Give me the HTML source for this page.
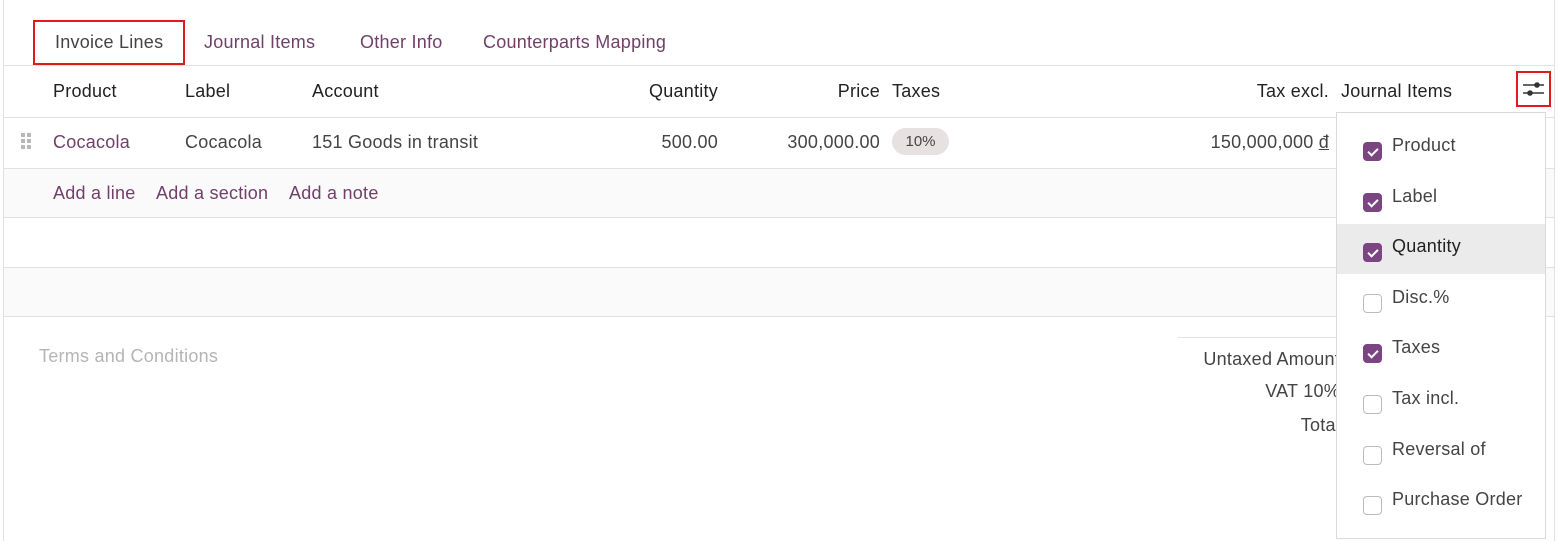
<!DOCTYPE html>
<html><head><meta charset="utf-8"><style>
*{box-sizing:border-box;margin:0;padding:0}
body{width:1558px;height:541px;background:#fff;font-family:"Liberation Sans",sans-serif;font-size:18px;letter-spacing:0.25px;color:#444;position:relative;overflow:hidden}
.abs{position:absolute;white-space:nowrap}
.p{color:#71406a}
.line{position:absolute;left:4px;right:4px;height:1px;background:#dee2e6}
.cb{position:absolute;width:19px;height:19px;border-radius:4px;border:1px solid #bbb;background:#fff}
.cb.on{background:#7b4582;border-color:#7b4582}
.cb.on::after{content:"";position:absolute;left:6px;top:2.5px;width:4px;height:8px;border:solid #fff;border-width:0 2px 2px 0;transform:rotate(45deg)}
.d{position:absolute;width:4px;height:4px;background:#b8b8b8}
</style></head><body>
<div style="position:absolute;left:3px;top:0;bottom:0;width:1px;background:#dee2e6"></div>
<div style="position:absolute;right:3px;top:0;bottom:0;width:1px;background:#dee2e6"></div>
<div style="position:absolute;left:4px;right:4px;top:169px;height:48px;background:#fafafa"></div>
<div style="position:absolute;left:4px;right:4px;top:268px;height:48px;background:#fafafa"></div>
<div class="line" style="top:65px"></div>
<div class="line" style="top:117px"></div>
<div class="line" style="top:168px"></div>
<div class="line" style="top:217px"></div>
<div class="line" style="top:267px"></div>
<div class="line" style="top:316px"></div>
<div style="position:absolute;left:1178px;width:170px;top:337px;height:1px;background:#dee2e6"></div>
<div style="position:absolute;left:33px;top:20px;width:152px;height:45px;border:2px solid #e01b1b"></div>
<div class="abs" style="left:55px;top:32px;color:#444">Invoice Lines</div>
<div class="abs p" style="left:204px;top:32px">Journal Items</div>
<div class="abs p" style="left:360px;top:32px">Other Info</div>
<div class="abs p" style="left:483px;top:32px">Counterparts Mapping</div>
<div class="abs" style="left:53px;top:81px;color:#222">Product</div>
<div class="abs" style="left:185px;top:81px;color:#222">Label</div>
<div class="abs" style="left:312px;top:81px;color:#222">Account</div>
<div class="abs" style="right:840px;top:81px;color:#222">Quantity</div>
<div class="abs" style="right:678px;top:81px;color:#222">Price</div>
<div class="abs" style="left:892px;top:81px;color:#222">Taxes</div>
<div class="abs" style="right:229px;top:81px;color:#222">Tax excl.</div>
<div class="abs" style="left:1341px;top:81px;color:#222">Journal Items</div>
<div style="position:absolute;left:1516px;top:71px;width:35px;height:36px;border:2px solid #e01b1b"></div>
<svg class="abs" style="left:1523px;top:81px" width="21" height="16" viewBox="0 0 21 16"><path d="M0 4h21M0 12h21" stroke="#333" stroke-width="1.6"/><circle cx="14" cy="4" r="2.8" fill="#333"/><circle cx="7" cy="12" r="2.8" fill="#333"/></svg>
<div class="d" style="left:21px;top:133px"></div><div class="d" style="left:27px;top:133px"></div>
<div class="d" style="left:21px;top:139px"></div><div class="d" style="left:27px;top:139px"></div>
<div class="d" style="left:21px;top:145px"></div><div class="d" style="left:27px;top:145px"></div>
<div class="abs p" style="left:53px;top:132px">Cocacola</div>
<div class="abs" style="left:185px;top:132px">Cocacola</div>
<div class="abs" style="left:312px;top:132px">151 Goods in transit</div>
<div class="abs" style="right:840px;top:132px">500.00</div>
<div class="abs" style="right:678px;top:132px">300,000.00</div>
<div class="abs" style="left:892px;top:128px;width:57px;height:27px;border-radius:14px;background:#e7e1e1;font-size:15px;letter-spacing:0;text-align:center;line-height:27px">10%</div>
<div class="abs" style="right:229px;top:132px">150,000,000 <u>đ</u></div>
<div class="abs p" style="left:53px;top:183px">Add a line</div>
<div class="abs p" style="left:156px;top:183px">Add a section</div>
<div class="abs p" style="left:289px;top:183px">Add a note</div>
<div class="abs" style="left:39px;top:346px;color:#b5b5b5">Terms and Conditions</div>
<div class="abs" style="right:218px;top:349px">Untaxed Amount</div>
<div class="abs" style="right:218px;top:381px">VAT 10%</div>
<div class="abs" style="right:218px;top:415px">Total</div>
<div style="position:absolute;left:1336px;top:112px;width:210px;height:427px;background:#fff;border:1px solid #d9d9d9">
<div style="position:absolute;left:0;right:0;top:111px;height:50px;background:#ebebeb"></div>
</div>
<div class="cb on" style="left:1363px;top:142px"></div><div class="abs" style="left:1392px;top:135px">Product</div>
<div class="cb on" style="left:1363px;top:193px"></div><div class="abs" style="left:1392px;top:186px">Label</div>
<div class="cb on" style="left:1363px;top:243px"></div><div class="abs" style="left:1392px;top:236px;color:#222">Quantity</div>
<div class="cb" style="left:1363px;top:294px"></div><div class="abs" style="left:1392px;top:287px">Disc.%</div>
<div class="cb on" style="left:1363px;top:344px"></div><div class="abs" style="left:1392px;top:337px">Taxes</div>
<div class="cb" style="left:1363px;top:395px"></div><div class="abs" style="left:1392px;top:388px">Tax incl.</div>
<div class="cb" style="left:1363px;top:446px"></div><div class="abs" style="left:1392px;top:439px">Reversal of</div>
<div class="cb" style="left:1363px;top:496px"></div><div class="abs" style="left:1392px;top:489px">Purchase Order</div>
</body></html>
